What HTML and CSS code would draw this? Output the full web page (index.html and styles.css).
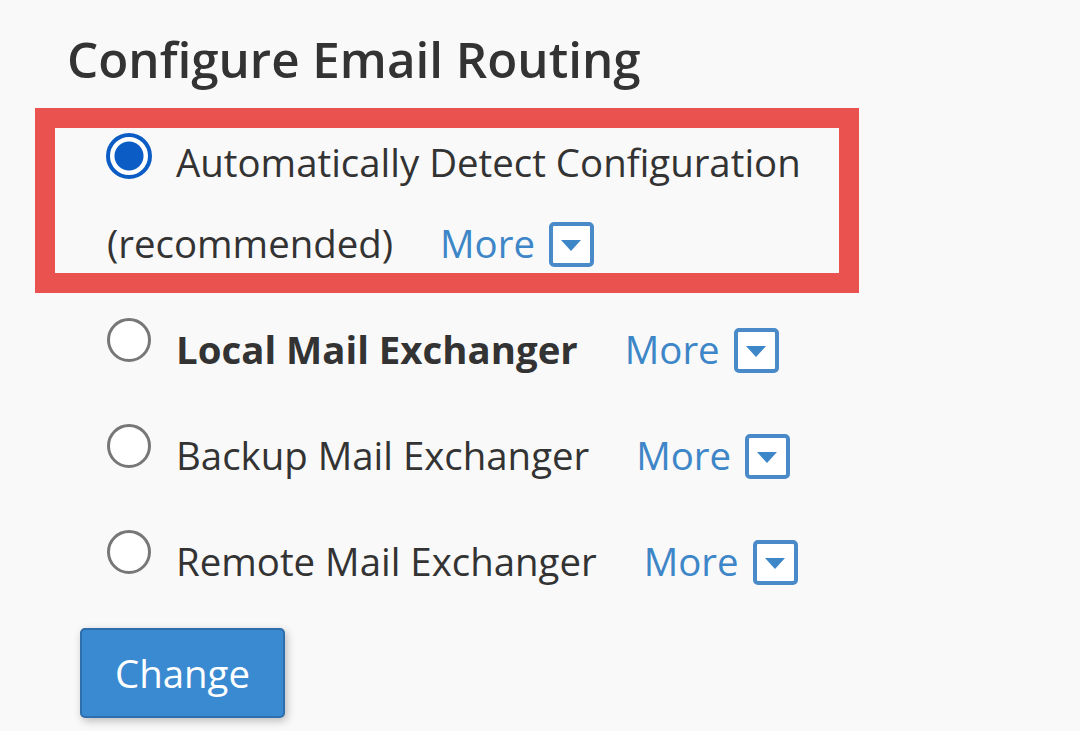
FILE: index.html
```html
<!DOCTYPE html>
<html lang="en">
<head>
<meta charset="utf-8">
<title>Configure Email Routing</title>
<link rel="stylesheet" href="styles.css">
</head>
<body>
<main class="page">
  <h1 class="title">Configure Email Routing</h1>
  <form class="options">
    <label class="option option--highlight">
      <span class="radio radio--checked"></span><span>Automatically Detect Configuration</span> <span>(recommended)</span><a class="more" href="#">More</a><span class="more-btn"><span class="caret"></span></span>
    </label>
    <label class="option">
      <span class="radio"></span><strong class="label-bold">Local Mail Exchanger</strong><a class="more" href="#">More</a><span class="more-btn"><span class="caret"></span></span>
    </label>
    <label class="option">
      <span class="radio"></span><span>Backup Mail Exchanger</span><a class="more" href="#">More</a><span class="more-btn"><span class="caret"></span></span>
    </label>
    <label class="option">
      <span class="radio"></span><span>Remote Mail Exchanger</span><a class="more" href="#">More</a><span class="more-btn"><span class="caret"></span></span>
    </label>
    <button class="btn" type="button">Change</button>
  </form>
</main>
</body>
</html>
```
FILE: styles.css
```css
html, body {
  margin: 0;
  padding: 0;
  background: #f9f9f9;
}
body {
  font-family: "Open Sans", "Noto Sans", sans-serif;
  color: #333333;
}
.page {
  width: 1080px;
  height: 731px;
  overflow: hidden;
}
.title {
  margin: 26px 0 0 67px;
  font-size: 49.3px;
  font-weight: 600;
  line-height: 65px;
  color: #333333;
}
.options {
  display: flex;
  flex-direction: column;
  align-items: flex-start;
  margin: 31px 0 0 107px;
  width: 720px;
}
.option {
  display: block;
  position: relative;
  font-size: 38.4px;
  line-height: 81px;
  margin-bottom: 25px;
}
.option--highlight::before {
  content: "";
  position: absolute;
  left: -72px;
  top: -14px;
  width: 784px;
  height: 145px;
  border: 20px solid #e9524f;
  pointer-events: none;
}
.radio {
  display: inline-block;
  box-sizing: border-box;
  width: 44px;
  height: 44px;
  border: 3px solid #777777;
  border-radius: 50%;
  background: #ffffff;
  margin-right: 25px;
  vertical-align: 2px;
}
.radio--checked {
  width: 46px;
  height: 46px;
  border: 4px solid #0b5cc5;
  background: radial-gradient(circle, #0b5cc5 0, #0b5cc5 14px, #ffffff 15px);
  margin-left: -1px;
  vertical-align: -2px;
  margin-right: 24px;
}
.label-bold {
  font-weight: 700;
}
.more {
  color: #3d86c8;
  text-decoration: none;
  margin-left: 47px;
}
.more-btn {
  display: inline-block;
  box-sizing: border-box;
  width: 45px;
  height: 45px;
  border: 4px solid #4a8ac8;
  border-radius: 5px;
  margin-left: 14px;
  vertical-align: -9px;
  position: relative;
  background: #ffffff;
}
.caret {
  position: absolute;
  left: 8px;
  top: 14px;
  width: 0;
  height: 0;
  border-left: 10.5px solid transparent;
  border-right: 10.5px solid transparent;
  border-top: 11px solid #3d86c8;
}
.btn {
  margin-top: 1px;
  margin-left: -27px;
  width: 205px;
  height: 90px;
  background: #3a8ad2;
  border: 2px solid #2f6eac;
  border-radius: 5px;
  color: #ffffff;
  font-family: "Open Sans", "Noto Sans", sans-serif;
  font-size: 38.4px;
  box-shadow: 2px 3px 8px rgba(0, 0, 0, 0.25);
  padding: 0;
}
```
